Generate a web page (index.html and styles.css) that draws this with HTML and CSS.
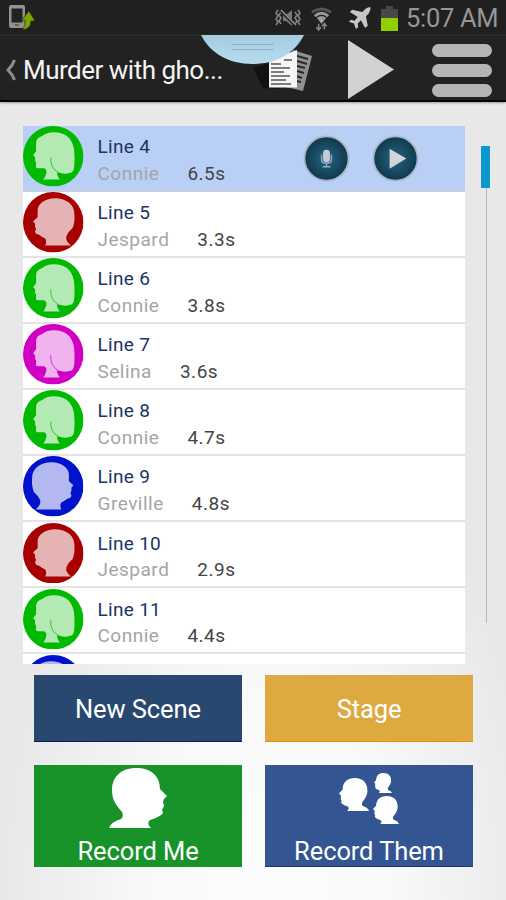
FILE: index.html
```html
<!DOCTYPE html>
<html lang="en">
<head>
<meta charset="utf-8">
<title>Murder with ghosts</title>
<link rel="stylesheet" href="styles.css">
</head>
<body>
<svg class="defs" aria-hidden="true">
  <symbol id="woman" viewBox="0 0 60 60"><circle cx="30" cy="30" r="30" fill="currentColor"/><path class="face" d="M32 6.300C26 6 22 7.500 19 10C14 12 13 14 13 18V25L10 29L12 31V35L13 36V39Q12 42 15 42H21Q24 44 23 47Q22 51 20 53H36.500Q33 48 34 45.500Q40 48 44 47Q49 47 50 44Q51.500 40 51 28C51 15 44 6.500 32 6.300Z"/><path d="M27.500 31Q27 42 34.500 45.500" fill="none" stroke="currentColor" stroke-width=".7"/></symbol>
  <symbol id="man" viewBox="0 0 60 60"><circle cx="30" cy="30" r="30" fill="currentColor"/><path class="face" d="M33 6.300C24 5.500 14.500 11 14.500 18V25L10 29L12 31.500V35L13 36.500L12 39Q12 42 16 42.500Q19 45 22 46Q24 49 22 53H47.500Q42 49 43 44Q45 39 49 36Q51.500 31 51 22C51 13 44 7 33 6.300Z"/></symbol>
  <symbol id="head" viewBox="0 0 58 60" preserveAspectRatio="none"><path fill="#fff" d="M27 0C12 0 3 9 3 22C3 33 8 38 13 44Q15 49 12 51Q2 54 0 60H42Q37 55 41 52Q51 49 54 45L53 42L55 38L54 34L55 31L58 28L51 21C51 8 42 0 27 0Z"/></symbol>
</svg>

<header class="status">
  <svg class="phone" viewBox="0 0 28 28"><rect x="2" y="2" width="16" height="23" rx="2" fill="#929292"/><path d="M4.500 5.500h11v14h-11z" fill="#222"/><path d="M8 22h4" stroke="#333"/><path d="M15 27Q19 23 18 17L14 18L22 8L28 18H24Q24 26 15 27Z" fill="#7ca600" stroke="#222" stroke-width=".6"/></svg>
  <div class="indicators">
    <svg class="mute" viewBox="0 0 28 20"><g fill="none" stroke="#858585" stroke-width="1.500"><path d="M4 2L2 5L4 8L2 11L4 14L2 17M7 4L5 7L7 10L5 13L7 16M24 2L26 5L24 8L26 11L24 14L26 17M21 4L23 7L21 10L23 13L21 16"/></g><path d="M9 7h3l6-5v16l-6-5H9z" fill="#777"/><path d="M7 3L22 18" stroke="#222" stroke-width="3"/><path d="M7 2L22 17" stroke="#929292" stroke-width="1.500"/></svg>
    <svg class="wifi" viewBox="0 0 24 26"><g fill="none" stroke-width="3"><path d="M2 6Q12-1 22 6" stroke="#555"/><path d="M5 10Q12 4 19 10" stroke="#999"/><path d="M8 13Q12 10 16 13" stroke="#999"/></g><path d="M9 14Q12 12 15 14L12 18Z" fill="#aaa"/><path d="M9 18v6M6.500 21.500l2.500 3l2.500-3M15 24v-6M12.500 20.500l2.500-3l2.500 3" fill="none" stroke="#888" stroke-width="1.500"/></svg>
    <svg class="plane" viewBox="0 0 24 24"><path fill="#c6c6c6" d="M23.500.5C21 0 19 1 17 3L14.500 5.500L3.500 3L1 5.500L9.500 11L6 15L2 14L0 16L5.500 18L7.500 24L10 22L9.500 18L13 14.500L17.500 23L20.500 20.500L18.500 10L21.500 7Q24 3 23.500.5Z"/></svg>
    <svg class="battery" viewBox="0 0 17 25"><path fill="#484848" d="M5 0h7v3h5v22H0V3h5z"/><path fill="#91d000" d="M0 12h17v13H0z"/></svg>
    <span class="clock">5:07 AM</span>
  </div>
</header>

<nav class="bar">
  <svg class="back" viewBox="0 0 12 22"><path d="M9.500 1C8 6 5 9 3 11C5 13 8 16 9.500 21" fill="none" stroke="#8e8e8e" stroke-width="3"/></svg>
  <h1>Murder with gho...</h1>
  <svg class="script" viewBox="0 0 60 48"><path d="M0 18L17 13V35L28 39L10 38Z" fill="#111"/><path d="M40 0L59 6L50 41L33 37Z" fill="#909090"/><path d="M44 6l11 3M44 11l10 3M44 16l8 2M44 21l7 2M43 26l6 2M43 31l5 1" stroke="#292929" stroke-width="2"/><path d="M16 10L44 0V37.500H16Z" fill="#f5f5f5"/><path d="M18 14h10M18 18h19M18 22h13M18 26h19M18 30h15M18 34h20M31 10h8" stroke="#555" stroke-width="1.500"/></svg>
  <svg class="play" viewBox="0 0 48 61"><path d="M1 1L47 30.500L1 60Z" fill="#d2d2d2"/></svg>
  <div class="menu"><i></i><i></i><i></i></div>
  <svg class="tab" viewBox="0 0 102 30" preserveAspectRatio="none"><defs><linearGradient id="sky" x2="0" y2="1"><stop stop-color="#a5cbdf"/><stop offset="1" stop-color="#b6dcee"/></linearGradient></defs><path d="M0 0H102C93 18 75 29 51 29S9 18 0 0Z" fill="url(#sky)"/><path d="M30 9.500H72M30 14.500H72" stroke="#8db2c6"/></svg>
</nav>

<main>
  <section class="lines">
    <ul class="list">
      <li class="row active"><svg class="avatar green"><use href="#woman"/></svg><div class="text"><b>Line 4</b><p><span>Connie</span><time>6.5s</time></p></div>
        <div class="tools">
          <svg viewBox="0 0 48 48"><defs><radialGradient id="deep"><stop stop-color="#266580"/><stop offset="1" stop-color="#10384e"/></radialGradient></defs><circle cx="24" cy="24" r="22.500" fill="url(#deep)" stroke="#a8b6c3" stroke-width="1.800"/><rect x="20.500" y="15" width="7" height="13" rx="3.500" fill="#c4cbd2"/><path d="M19 20v5q0 4 5 4t5-4v-5M24 29v3M20 32.500h8" fill="none" stroke="#8eaabd" stroke-width="1.500"/></svg>
          <svg viewBox="0 0 48 48"><circle cx="24" cy="24" r="22.500" fill="url(#deep)" stroke="#a8b6c3" stroke-width="1.800"/><path d="M18 14L35 24L18 34.500Z" fill="#d3d5d9"/></svg>
        </div></li>
      <li class="row"><svg class="avatar red"><use href="#man"/></svg><div class="text"><b>Line 5</b><p><span>Jespard</span><time>3.3s</time></p></div></li>
      <li class="row"><svg class="avatar green"><use href="#woman"/></svg><div class="text"><b>Line 6</b><p><span>Connie</span><time>3.8s</time></p></div></li>
      <li class="row"><svg class="avatar pink"><use href="#woman"/></svg><div class="text"><b>Line 7</b><p><span>Selina</span><time>3.6s</time></p></div></li>
      <li class="row"><svg class="avatar green"><use href="#woman"/></svg><div class="text"><b>Line 8</b><p><span>Connie</span><time>4.7s</time></p></div></li>
      <li class="row"><svg class="avatar blue flip"><use href="#man"/></svg><div class="text"><b>Line 9</b><p><span>Greville</span><time>4.8s</time></p></div></li>
      <li class="row"><svg class="avatar red"><use href="#man"/></svg><div class="text"><b>Line 10</b><p><span>Jespard</span><time>2.9s</time></p></div></li>
      <li class="row"><svg class="avatar green"><use href="#woman"/></svg><div class="text"><b>Line 11</b><p><span>Connie</span><time>4.4s</time></p></div></li>
      <li class="row"><svg class="avatar blue flip"><use href="#man"/></svg></li>
    </ul>
    <div class="scroll"><div class="thumb"></div><div class="track"></div></div>
  </section>
  <section class="actions">
    <button class="navy">New Scene</button>
    <button class="gold">Stage</button>
    <button class="leaf"><svg class="me"><use href="#head"/></svg><span>Record Me</span></button>
    <button class="royal"><svg class="them" viewBox="0 0 60 51"><use href="#head" transform="translate(30 5) scale(-1 1)" width="30" height="33"/><use href="#head" transform="translate(53 0) scale(-1 1)" width="18" height="20"/><use href="#head" transform="translate(60 23) scale(-1 1)" width="26" height="28"/></svg><span>Record Them</span></button>
  </section>
</main>
</body>
</html>
```

FILE: styles.css
```css
* { box-sizing: border-box; }
body {
  margin: 0;
  width: 506px;
  height: 900px;
  overflow: hidden;
  font-family: Roboto, "Liberation Sans", sans-serif;
  background: radial-gradient(ellipse 270px 480px at 270px 900px, #fdfdfd, #f9f9f9 45%, #e8e8e8 100%);
}
svg { display: block; flex: none; }
.defs { position: absolute; width: 0; height: 0; }
.status {
  height: 35px;
  display: flex;
  justify-content: space-between;
  padding: 0 8px 0 7px;
  background: #202020;
}
.phone { width: 28px; height: 28px; margin-top: 3px; }
.indicators { display: flex; align-items: flex-start; }
.mute { width: 28px; height: 20px; margin-top: 8px; }
.wifi { width: 23px; height: 26px; margin: 6px 0 0 8px; }
.plane { width: 24px; height: 22px; margin: 7px 0 0 15px; }
.battery { width: 17px; height: 25px; margin: 6px 0 0 9px; }
.clock {
  width: 92px;
  margin-left: 8px;
  font-size: 25.5px;
  line-height: 36px;
  letter-spacing: -.3px;
  color: #969696;
  white-space: nowrap;
}
.bar {
  position: relative;
  height: 67px;
  display: flex;
  align-items: flex-start;
  background: #222;
  border-top: 1px solid #2b2b2b;
  border-bottom: 2px solid #050505;
  box-shadow: 0 1px 2px #999;
}
.back { width: 12px; height: 22px; margin: 23px 0 0 5px; }
h1 {
  width: 206px;
  margin: 0 0 0 6px;
  font-size: 26px;
  font-weight: 400;
  line-height: 69px;
  letter-spacing: -.5px;
  color: #f4f4f4;
  white-space: nowrap;
}
.script { width: 60px; height: 48px; margin: 14px 0 0 24px; }
.play { width: 48px; height: 61px; margin: 3px 0 0 34px; }
.menu { width: 60px; margin: 7.500px 0 0 37px; display: grid; gap: 7px; }
.menu i { height: 13px; border-radius: 6.500px; background: #b5b5b5; }
.tab { position: absolute; left: 201px; top: -1px; width: 103px; height: 30px; }
main { padding: 23.500px 23px 0; }
.lines { display: flex; }
.list {
  flex: none;
  width: 442px;
  height: 538px;
  margin: 0;
  padding: 0;
  overflow: hidden;
  list-style: none;
  background: #fff;
}
.row { height: 66.1px; display: flex; border-bottom: 2px solid #e4e4e4; }
.active { background: #bacff5; border-color: #c7d0df; }
.avatar { width: 60.5px; height: 60.5px; margin-top: .5px; }
.flip { transform: scaleX(-1); }
.green { color: #00b900; }
.red { color: #a80000; }
.pink { color: #cf00c4; }
.blue { color: #0012cb; }
.face { fill: #fff; fill-opacity: .7; }
.text { flex: none; width: 200px; padding: 9.500px 0 0 14px; font-size: 19px; }
.text b {
  display: block;
  font-weight: 400;
  line-height: 24px;
  letter-spacing: .3px;
  color: #1c3466;
}
.text p {
  display: flex;
  gap: 28px;
  margin: 2.500px 0 0;
  line-height: 24px;
  letter-spacing: .5px;
}
.text span { color: #a5a5a5; }
.text time { color: #444; }
.tools { display: flex; gap: 22px; margin: 9px 0 0 19px; }
.tools svg { width: 47px; height: 47px; }
.scroll { flex: none; width: 10px; margin: 20.500px 0 0 16px; }
.thumb { width: 9px; height: 42px; border-radius: 1px; background: #0999cf; }
.track { width: 1px; height: 435px; margin-left: 5px; background: #b9b9b9; }
.actions {
  display: grid;
  grid-template-columns: 208px 208px;
  grid-template-rows: 67px 102px;
  gap: 23px;
  margin: 11px 0 0 11px;
}
button {
  display: flex;
  flex-direction: column;
  align-items: center;
  justify-content: center;
  padding: 0;
  border: 0;
  font: 25.500px/30px Roboto, "Liberation Sans", sans-serif;
  letter-spacing: -.1px;
  color: #fff;
}
.navy { padding-top: 3px; background: #29486f; border-bottom: 1px solid #091c63; }
.gold { padding-top: 3px; background: #dfa942; border-bottom: 1px solid #dc9800; }
.leaf { background: #189329; justify-content: flex-start; }
.royal { background: #335591; justify-content: flex-start; border-bottom: 1px solid #153484; }
.me { width: 58px; height: 60px; margin-top: 3px; }
.leaf span { margin-top: 8px; }
.them { width: 60px; height: 51px; margin-top: 8px; }
.royal span { margin-top: 12px; }
```
